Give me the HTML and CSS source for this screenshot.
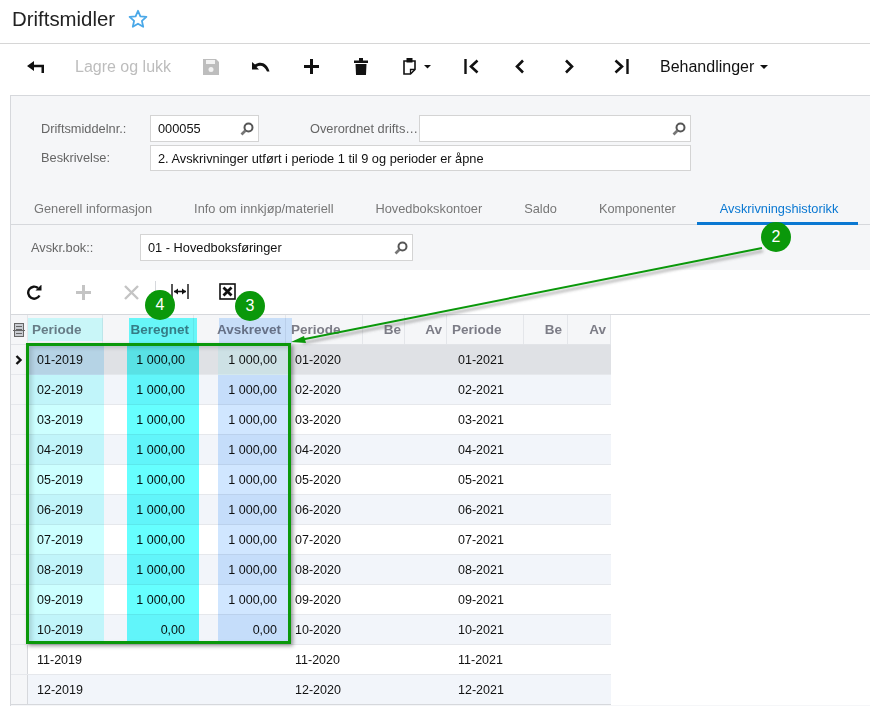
FILE: index.html
```html
<!DOCTYPE html>
<html lang="nb">
<head>
<meta charset="utf-8">
<title>Driftsmidler</title>
<link rel="stylesheet" href="styles.css">
</head>
<body>
<div class="page">
  <header class="titlebar">
    <h1>Driftsmidler</h1>
    <svg class="star" viewBox="0 0 20 20" width="20" height="20"><path d="M10 1.8l2.4 5.5 6 .6-4.500 4 1.300 5.900L10 14.700l-5.200 3.100 1.300-5.900-4.500-4 6-.6z" fill="none" stroke="#4aa8e8" stroke-width="1.800" stroke-linejoin="round"/></svg>
  </header>

  <nav class="toolbar">
    <span class="tb w50"><svg viewBox="0 0 17 12" width="17" height="12"><path d="M7 0L0 5l7 5V6.300h7.500V12H17V3.700H7z" fill="#111"/></svg></span>
    <span class="tb-text">Lagre og lukk</span>
    <span class="tb w50"><svg viewBox="0 0 16 16" width="16" height="16"><path d="M0 0h13l3 3v13H0z" fill="#bdbdbd"/><rect x="3" y="1" width="9" height="4" fill="#f2f2f2"/><circle cx="8" cy="10.500" r="2.500" fill="#f2f2f2"/></svg></span>
    <span class="tb w50"><svg viewBox="0 0 18 11" width="18" height="11"><path d="M0 1v7.500h7L4.500 6C8 3.500 12.500 4.500 15 10.500h2.500C15.500 2 8.500-.5 3 3.500z" fill="#111"/></svg></span>
    <span class="tb w50"><svg viewBox="0 0 15 15" width="15" height="15"><path d="M6 0h3v6h6v3H9v6H6V9H0V6h6z" fill="#111"/></svg></span>
    <span class="tb w50"><svg viewBox="0 0 14 17" width="14" height="17"><path d="M0 2.500h5V0h4v2.500h5V5H0zM1.500 6h11L12 16.500a.5.500 0 0 1-.5.500h-9a.5.500 0 0 1-.5-.5z" fill="#111"/></svg></span>
    <span class="tb w60"><svg viewBox="0 0 28 17" width="28" height="17"><path d="M4 3H1v13h6.500L12 11.500V3H9" fill="none" stroke="#111" stroke-width="1.600"/><path d="M7.500 16v-4.500H12" fill="none" stroke="#111" stroke-width="1.300"/><rect x="3.500" y="0" width="6" height="4.500" fill="#111"/><path d="M21 7h7l-3.500 3.500z" fill="#111"/></svg></span>
    <span class="tb w50"><svg viewBox="0 0 15 15" width="15" height="15"><path d="M1.500 0v15" stroke="#111" stroke-width="2.400"/><path d="M13.500 1.500L7 7.500l6.500 6" fill="none" stroke="#111" stroke-width="2.600"/></svg></span>
    <span class="tb w46"><svg viewBox="0 0 11 15" width="11" height="15"><path d="M9 1.500L3 7.500l6 6" fill="none" stroke="#111" stroke-width="2.600"/></svg></span>
    <span class="tb w54"><svg viewBox="0 0 11 15" width="11" height="15"><path d="M2 1.500l6 6-6 6" fill="none" stroke="#111" stroke-width="2.600"/></svg></span>
    <span class="tb w50"><svg viewBox="0 0 15 15" width="15" height="15"><path d="M13.500 0v15" stroke="#111" stroke-width="2.400"/><path d="M1.500 1.500L8 7.500l-6.500 6" fill="none" stroke="#111" stroke-width="2.600"/></svg></span>
    <span class="tb-menu">Behandlinger<i class="caret"></i></span>
  </nav>

  <main class="panel">
    <section class="form">
      <div class="form-row">
        <label class="lbl">Driftsmiddelnr.:</label>
        <div class="field f-id">000055<svg class="mag" viewBox="0 0 14 14" width="14" height="14"><circle cx="8.500" cy="5.500" r="4" fill="none" stroke="#555" stroke-width="2"/><path d="M5.500 8.500L1.500 12.500" stroke="#777" stroke-width="2.600"/></svg></div>
        <label class="lbl lbl-parent">Overordnet drifts…</label>
        <div class="field f-parent"><svg class="mag" viewBox="0 0 14 14" width="14" height="14"><circle cx="8.500" cy="5.500" r="4" fill="none" stroke="#555" stroke-width="2"/><path d="M5.500 8.500L1.500 12.500" stroke="#777" stroke-width="2.600"/></svg></div>
      </div>
      <div class="form-row">
        <label class="lbl">Beskrivelse:</label>
        <div class="field f-desc">2. Avskrivninger utført i periode 1 til 9 og perioder er åpne</div>
      </div>
    </section>

    <div class="tabs">
      <span class="tab">Generell informasjon</span>
      <span class="tab">Info om innkjøp/materiell</span>
      <span class="tab">Hovedbokskontoer</span>
      <span class="tab">Saldo</span>
      <span class="tab">Komponenter</span>
      <span class="tab active">Avskrivningshistorikk</span>
    </div>

    <div class="book">
      <label class="lbl lbl-book">Avskr.bok::</label>
      <div class="field f-book">01 - Hovedboksføringer<svg class="mag" viewBox="0 0 14 14" width="14" height="14"><circle cx="8.500" cy="5.500" r="4" fill="none" stroke="#555" stroke-width="2"/><path d="M5.500 8.500L1.500 12.500" stroke="#777" stroke-width="2.600"/></svg></div>
    </div>

    <div class="gridbar">
      <span class="gb gb-first"><svg viewBox="0 0 15 15" width="15" height="15"><path d="M12.500 10.500A6 6 0 1 1 11 3" fill="none" stroke="#111" stroke-width="2.400"/><path d="M8.500 5.500h6v-6z" fill="#111"/></svg></span>
      <span class="gb"><svg viewBox="0 0 15 15" width="15" height="15"><path d="M6 0h3v6h6v3H9v6H6V9H0V6h6z" fill="#c4c4c4"/></svg></span>
      <span class="gb gb-sep"><svg viewBox="0 0 15 15" width="15" height="15"><path d="M1 1l13 13M14 1L1 14" stroke="#c4c4c4" stroke-width="2.400"/></svg></span>
      <span class="gb gb-fit"><svg viewBox="0 0 18 15" width="18" height="15"><path d="M1 0v15M17 0v15" stroke="#111" stroke-width="1.400"/><path d="M3 7.500h12" stroke="#111" stroke-width="1.600"/><path d="M3 7.500l4-3v6zM15 7.500l-4-3v6z" fill="#111"/></svg></span>
      <span class="gb gb-xl"><svg viewBox="0 0 17 17" width="17" height="17"><rect x="1" y="1" width="15" height="15" fill="#fff" stroke="#111" stroke-width="1.600"/><path d="M4.500 4.500l8 8M12.500 4.500l-8 8" stroke="#111" stroke-width="2.800"/></svg></span>
    </div>

    <div class="grid">
      <div class="row head">
        <div class="c gut"><svg viewBox="0 0 12 14" width="12" height="14"><rect x="1.500" y=".5" width="9" height="13" fill="#c9ccd2" stroke="#666"/><path d="M3 3.500h6M3 6.500h6M0 7.500h12M3 10.500h6" stroke="#666"/></svg></div>
        <div class="c p1">Periode</div><div class="c r1">Beregnet</div><div class="c r1">Avskrevet</div>
        <div class="c p1b">Periode</div><div class="c r1b">Be</div><div class="c r1">Av</div>
        <div class="c p1b">Periode</div><div class="c r1c">Be</div><div class="c r1">Av</div>
      </div>
      <div class="row sel">
        <div class="c gut"><svg viewBox="0 0 8 10" width="8" height="10"><path d="M1.500 1l4 4-4 4" fill="none" stroke="#111" stroke-width="2.400"/></svg></div>
        <div class="c p2">01-2019</div><div class="c r2">1 000,00</div><div class="c r2">1 000,00</div><div class="c p2">01-2020</div><div class="c"></div><div class="c"></div><div class="c p3">01-2021</div><div class="c"></div><div class="c"></div>
      </div>
      <div class="row alt"><div class="c gut"></div><div class="c p2">02-2019</div><div class="c r2">1 000,00</div><div class="c r2">1 000,00</div><div class="c p2">02-2020</div><div class="c"></div><div class="c"></div><div class="c p3">02-2021</div><div class="c"></div><div class="c"></div></div>
      <div class="row"><div class="c gut"></div><div class="c p2">03-2019</div><div class="c r2">1 000,00</div><div class="c r2">1 000,00</div><div class="c p2">03-2020</div><div class="c"></div><div class="c"></div><div class="c p3">03-2021</div><div class="c"></div><div class="c"></div></div>
      <div class="row alt"><div class="c gut"></div><div class="c p2">04-2019</div><div class="c r2">1 000,00</div><div class="c r2">1 000,00</div><div class="c p2">04-2020</div><div class="c"></div><div class="c"></div><div class="c p3">04-2021</div><div class="c"></div><div class="c"></div></div>
      <div class="row"><div class="c gut"></div><div class="c p2">05-2019</div><div class="c r2">1 000,00</div><div class="c r2">1 000,00</div><div class="c p2">05-2020</div><div class="c"></div><div class="c"></div><div class="c p3">05-2021</div><div class="c"></div><div class="c"></div></div>
      <div class="row alt"><div class="c gut"></div><div class="c p2">06-2019</div><div class="c r2">1 000,00</div><div class="c r2">1 000,00</div><div class="c p2">06-2020</div><div class="c"></div><div class="c"></div><div class="c p3">06-2021</div><div class="c"></div><div class="c"></div></div>
      <div class="row"><div class="c gut"></div><div class="c p2">07-2019</div><div class="c r2">1 000,00</div><div class="c r2">1 000,00</div><div class="c p2">07-2020</div><div class="c"></div><div class="c"></div><div class="c p3">07-2021</div><div class="c"></div><div class="c"></div></div>
      <div class="row alt"><div class="c gut"></div><div class="c p2">08-2019</div><div class="c r2">1 000,00</div><div class="c r2">1 000,00</div><div class="c p2">08-2020</div><div class="c"></div><div class="c"></div><div class="c p3">08-2021</div><div class="c"></div><div class="c"></div></div>
      <div class="row"><div class="c gut"></div><div class="c p2">09-2019</div><div class="c r2">1 000,00</div><div class="c r2">1 000,00</div><div class="c p2">09-2020</div><div class="c"></div><div class="c"></div><div class="c p3">09-2021</div><div class="c"></div><div class="c"></div></div>
      <div class="row alt"><div class="c gut"></div><div class="c p2">10-2019</div><div class="c r2">0,00</div><div class="c r2">0,00</div><div class="c p2">10-2020</div><div class="c"></div><div class="c"></div><div class="c p3">10-2021</div><div class="c"></div><div class="c"></div></div>
      <div class="row"><div class="c gut"></div><div class="c p2">11-2019</div><div class="c r2"></div><div class="c r2"></div><div class="c p2">11-2020</div><div class="c"></div><div class="c"></div><div class="c p3">11-2021</div><div class="c"></div><div class="c"></div></div>
      <div class="row alt last"><div class="c gut"></div><div class="c p2">12-2019</div><div class="c r2"></div><div class="c r2"></div><div class="c p2">12-2020</div><div class="c"></div><div class="c"></div><div class="c p3">12-2021</div><div class="c"></div><div class="c"></div></div>
    </div>
  </main>

  <div class="hl hl-ph"></div>
  <div class="hl hl-bh"></div>
  <div class="hl hl-ah"></div>
  <div class="hl hl-p"></div>
  <div class="hl hl-sel"></div>
  <div class="hl hl-b"></div>
  <div class="hl hl-a"></div>
  <div class="hl hl-asel"></div>
  <div class="frame"></div>
  <svg class="arrow" viewBox="0 0 870 706" width="870" height="706">
    <defs><filter id="sh" x="-5%" y="-20%" width="110%" height="150%"><feGaussianBlur stdDeviation="1.500"/></filter></defs>
    <path d="M762 248L302 340" stroke="#555" stroke-opacity=".55" stroke-width="2" filter="url(#sh)" transform="translate(1 3)"/>
    <path d="M762 248L300 340" stroke="#0a980a" stroke-width="2"/>
    <path d="M291 342l13-6 2 7z" fill="#0a980a"/>
  </svg>
  <span class="badge b2">2</span>
  <span class="badge b4">4</span>
  <span class="badge b3">3</span>
</div>
</body>
</html>
```

FILE: styles.css
```css
* { box-sizing: border-box; }
html, body { margin: 0; padding: 0; background: #fff; }
body { font-family: "Liberation Sans", Arial, sans-serif; color: #111; overflow: hidden; }
.page { position: relative; width: 870px; height: 706px; overflow: hidden; }

.titlebar { height: 44px; border-bottom: 1px solid #d6d6d6; display: flex; align-items: center; padding: 0 0 5px 12px; }
.titlebar h1 { margin: 0; font-size: 20.4px; font-weight: 400; color: #222; }
.star { margin-left: 13px; }

.toolbar { height: 51px; display: flex; align-items: center; padding: 0 0 6px 10px; font-size: 16px; }
.tb { display: flex; align-items: center; justify-content: center; height: 30px; }
.w46 { width: 46px; } .w50 { width: 50px; } .w54 { width: 54px; }
.w60 { width: 60px; justify-content: flex-start; padding-left: 17px; }
.tb-text { width: 126px; padding-left: 15px; color: #bdbdbd; }
.tb-menu { padding-left: 14px; color: #111; display: flex; align-items: center; }
.caret { width: 0; height: 0; margin-left: 6px; border: 4px solid transparent; border-top-color: #111; border-bottom: 0; }

.panel { margin-left: 10px; border-left: 1px solid #d6d8dc; border-top: 1px solid #d6d8dc; background: #f5f6f8; height: 611px; }
.form { padding: 19px 0 0 30px; height: 95px; }
.form-row { display: flex; align-items: center; margin-bottom: 3px; }
.lbl { width: 109px; font-size: 12.8px; color: #666; padding-bottom: 1px; white-space: nowrap; }
.lbl-parent { width: 109px; margin-left: 51px; }
.field { position: relative; height: 27px; line-height: 25px; background: #fff; border: 1px solid #d4d4d4; padding-left: 7px; font-size: 12.8px; color: #111; }
.f-id { width: 109px; }
.f-parent { width: 272px; }
.f-desc { width: 541px; height: 26px; }
.f-book { width: 273px; }
.mag { position: absolute; right: 4px; top: 6px; }

.tabs { display: flex; height: 34px; padding-left: 2px; border-bottom: 1px solid #d6d8dc; font-size: 12.8px; color: #777; }
.tab { padding: 10px 21px 0; white-space: nowrap; }
.tab.active { color: #0a78d2; border-bottom: 3px solid #0a78d2; height: 34px; padding-left: 23px; padding-right: 20px; }

.book { height: 45px; display: flex; align-items: center; padding-left: 20px; }
.lbl-book { width: 109px; }

.gridbar { height: 45px; background: #fff; display: flex; align-items: center; padding: 1px 0 0 15px; border-bottom: 1px solid #d6d8dc; }
.gb { width: 48px; display: flex; align-items: center; justify-content: center; height: 30px; }
.gb-first { width: 16px; margin-right: 17px; }
.gb-sep { border-right: 1px solid #d6d8dc; width: 49px; height: 24px; }
.gb-fit { width: 47px; padding-bottom: 2px; }
.gb-xl { padding-bottom: 2px; }

.grid { background: #fff; }
.row { display: grid; grid-template-columns: 17px 75px 91px 92px 77px 42px 42px 77px 44px 43px; width: 600px; height: 30px; border-bottom: 1px solid #e6e8ec; background: #fff; font-size: 12.5px; line-height: 30px; }
.row.alt { background: #f2f5fa; }
.row.sel { background: #dfe1e5; }
.row.last { border-bottom: 1px solid #d6d8dc; }
.row.head { background: #f5f6f8; font-size: 13.5px; font-weight: 700; color: #7c7c86; border-bottom: 1px solid #e2e4e8; }
.c { min-width: 0; overflow: hidden; white-space: nowrap; }
.head .c { border-right: 1px solid #e4e6ea; }
.gut { background: #f5f6f8; border-right: 1px solid #d6d8dc; display: flex; align-items: center; justify-content: center; }
.p1 { padding-left: 4px; }
.p1b { padding-left: 5px; }
.r1 { padding-right: 4px; text-align: right; }
.r1b { padding-right: 3px; text-align: right; }
.r1c { padding-right: 5px; text-align: right; }
.p2 { padding-left: 9px; }
.p3 { padding-left: 11px; }
.r2 { padding-right: 9px; text-align: right; }

.hl { position: absolute; mix-blend-mode: multiply; pointer-events: none; }
.hl-ph { left: 28px; top: 318px; width: 75px; height: 23px; background: #d2ffff; }
.hl-bh { left: 129px; top: 318px; width: 68px; height: 26px; background: #6bffff; }
.hl-ah { left: 219px; top: 318px; width: 73px; height: 26px; background: #d0e6ff; }
.hl-p { left: 28px; top: 375px; width: 76px; height: 269px; background: #ccffff; }
.hl-sel { left: 28px; top: 345px; width: 76px; height: 30px; background: #cfefff; }
.hl-b { left: 127px; top: 345px; width: 72px; height: 299px; background: #66ffff; }
.hl-a { left: 218px; top: 375px; width: 71px; height: 269px; background: #d0e6ff; }
.hl-asel { left: 218px; top: 345px; width: 71px; height: 30px; background: #ebffff; }
.frame { position: absolute; left: 26px; top: 343px; width: 265px; height: 301px; border: 3px solid #0a980a; box-shadow: 2px 2px 4px rgba(0,0,0,.4), inset 3px 2px 4px rgba(0,0,0,.14); }
.arrow { position: absolute; left: 0; top: 0; pointer-events: none; }
.badge { position: absolute; width: 30px; height: 30px; border-radius: 50%; background: #0a980a; color: #fff; font-size: 16px; line-height: 30px; text-align: center; }
.b2 { left: 761px; top: 222px; }
.b4 { left: 145px; top: 290px; }
.b3 { left: 235px; top: 291px; }
```
